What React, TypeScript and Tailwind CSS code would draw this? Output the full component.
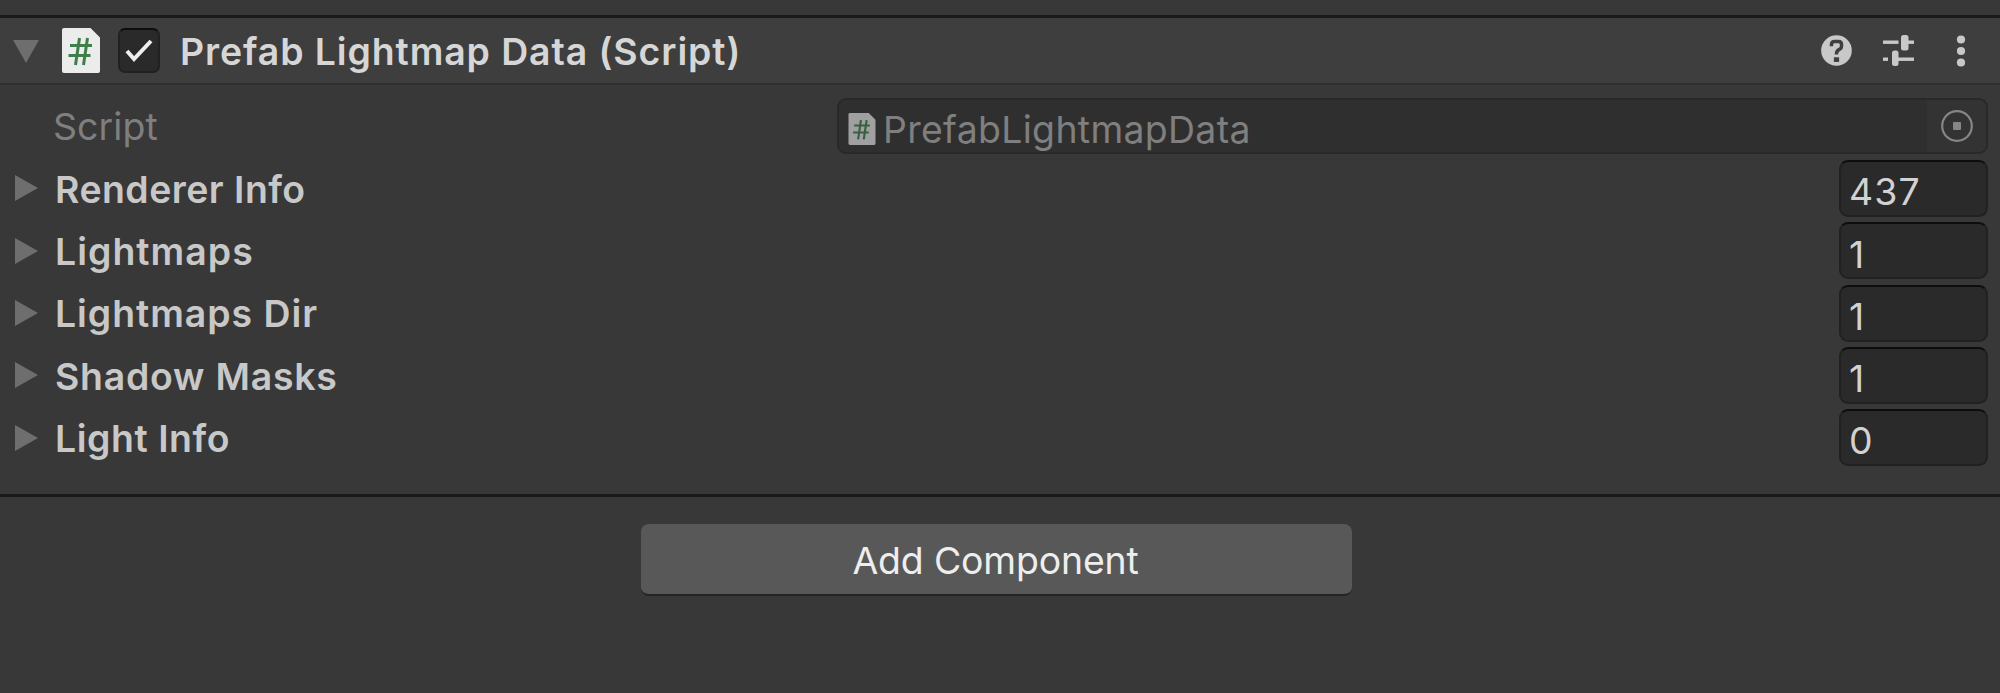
import type { ReactNode } from "react";

const ARRAYS = [
  { label: "Renderer Info", size: "437", tracking: "tracking-[0.48px]" },
  { label: "Lightmaps", size: "1", tracking: "tracking-[1.04px]" },
  { label: "Lightmaps Dir", size: "1", tracking: "tracking-[0.96px]" },
  { label: "Shadow Masks", size: "1", tracking: "tracking-[0.77px]" },
  { label: "Light Info", size: "0", tracking: "tracking-[0.55px]" },
];

function ScriptIcon({ className }: { className: string }) {
  return (
    <svg viewBox="0 0 38 45" className={className} aria-hidden="true">
      <path d="M2 0H28.5L38 9.5V43Q38 45 36 45H2Q0 45 0 43V2Q0 0 2 0Z" fill="#ececec" />
      <path d="M17.5 10L13.5 37M25.5 10L21.5 37M8 17.5H30M6.5 27.5H28.5" stroke="#3f7f4a" strokeWidth="3" fill="none" />
    </svg>
  );
}

function Row({ children }: { children: ReactNode }) {
  return <div className="flex h-[62.3px] items-center pr-3">{children}</div>;
}

export default function App() {
  return (
    <main className="flex h-[693px] w-[2000px] flex-col overflow-hidden bg-[#383838] font-['Inter',sans-serif] text-[37.4px] leading-none tracking-[1.1px] whitespace-nowrap text-[#c8c8c8] [font-optical-sizing:none]">
      <header className="mt-[15px] flex h-[70px] shrink-0 items-center border-t-3 border-b-2 border-t-[#1a1a1a] border-b-[#303030] bg-[#3e3e3e] pl-[13px]">
        <svg viewBox="0 0 26 23" className="mt-[2px] h-[23px] w-[26px]" aria-hidden="true">
          <path d="M0 0H26L13 23Z" fill="#6e6e6e" />
        </svg>
        <ScriptIcon className="ml-[22.5px] h-[45px] w-[38px]" />
        <span className="ml-[18.5px] flex h-[45px] w-[42px] items-center justify-center rounded-[7px] border-2 border-[#212121] border-t-[#0d0d0d] bg-[#2a2a2a]">
          <svg viewBox="0 0 28 24" className="h-6 w-7" aria-hidden="true">
            <path d="M2 12L9 20L26 2" fill="none" stroke="#eeeeee" strokeWidth="4" />
          </svg>
        </span>
        <h1 className="mt-[3px] ml-5 font-semibold tracking-[0.91px] text-[#d6d6d6]">Prefab Lightmap Data (Script)</h1>
        <div className="mr-[34.5px] ml-auto flex items-center">
          <svg viewBox="0 0 32 32" className="size-[31px]" aria-hidden="true">
            <circle cx="16" cy="16" r="15.8" fill="#c8c8c8" />
            <path d="M10.8 11.5V10Q10.8 6.8 14 6.8H18Q21.2 6.8 21.2 10V11.5Q21.2 13.5 19.5 14.5Q16 16 16 19V20" fill="none" stroke="#3e3e3e" strokeWidth="3.6" />
            <rect x="13.3" y="23" width="5.4" height="4.8" fill="#3e3e3e" />
          </svg>
          <svg viewBox="0 0 31 31" className="ml-[31.5px] size-[31px]" aria-hidden="true">
            <g fill="#c8c8c8">
              <rect x="0" y="5.5" width="15.5" height="3.4" />
              <rect x="18" y="0" width="7.5" height="15.5" rx="2.5" />
              <rect x="25" y="5.5" width="6" height="3.4" />
              <rect x="0" y="22.5" width="5" height="3.4" />
              <rect x="9" y="15.5" width="6.5" height="15.5" rx="2.5" />
              <rect x="15" y="22.5" width="16" height="3.4" />
            </g>
          </svg>
          <svg viewBox="0 0 10 32" className="ml-[41.5px] h-8 w-[10px]" aria-hidden="true">
            <g fill="#c8c8c8">
              <circle cx="5" cy="4.5" r="4.1" />
              <circle cx="5" cy="16" r="4.1" />
              <circle cx="5" cy="27.5" r="4.1" />
            </g>
          </svg>
        </div>
      </header>

      <section className="shrink-0 border-b-3 border-[#1a1a1a] pt-[10px] pb-[25px]">
        <Row>
          <span className="mt-[2px] ml-[53px] tracking-[0.12px] text-[#7f7f7f]">Script</span>
          <div className="ml-auto flex h-14 w-[1151px] items-center rounded-[9px] border-2 border-[#292929] bg-[#2f2f2f]">
            <ScriptIcon className="mt-[5px] ml-[9px] h-8 w-7 opacity-60" />
            <span className="mt-[7px] ml-[7px] tracking-[0.33px] text-[#7f7f7f]">PrefabLightmapData</span>
            <span className="ml-auto flex h-full w-[59px] items-center justify-center rounded-r-[7px] bg-[#333333]">
              <svg viewBox="0 0 32 32" className="size-8" aria-hidden="true">
                <circle cx="16" cy="16" r="14.8" fill="none" stroke="#868686" strokeWidth="2.2" />
                <rect x="12" y="12" width="8" height="8" rx="1" fill="#868686" />
              </svg>
            </span>
          </div>
        </Row>
        {ARRAYS.map(({ label, size, tracking }) => (
          <Row key={label}>
            <svg viewBox="0 0 23 26" className="ml-[15px] h-[26px] w-[23px]" aria-hidden="true">
              <path d="M0 0L23 13L0 26Z" fill="#6e6e6e" />
            </svg>
            <span className={`mt-[2px] ml-[17px] font-semibold ${tracking}`}>{label}</span>
            <span className="ml-auto flex h-[57px] w-[149px] items-center rounded-[9px] border-2 border-[#212121] border-t-[#0d0d0d] bg-[#2a2a2a] pt-[7px] pl-[8px] text-[#d2d2d2]">
              {size}
            </span>
          </Row>
        ))}
      </section>

      <button className="mt-[27px] ml-[641px] flex h-[72px] w-[711px] shrink-0 items-center justify-center rounded-[8px] border-b-2 border-[#242424] bg-[#585858] pt-[4px] pr-[2px] tracking-[-0.15px] text-[#eeeeee]">
        Add Component
      </button>
    </main>
  );
}
